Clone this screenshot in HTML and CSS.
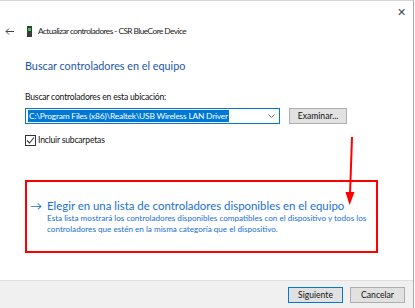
FILE: index.html
```html
<!DOCTYPE html>
<html lang="es">
<head>
  <meta charset="UTF-8" />
  <title>Actualizar controladores</title>
  <link rel="stylesheet" href="styles.css">
</head>
<body>
  <div class="window">
    <div class="topbar">
      <span class="close">&#x2715;</span>
    </div>
    <div class="header">
      <svg class="back" width="9" height="7" viewBox="0 0 9 7"><path d="M9 3.5 L1 3.5 M4 0.5 L1 3.5 L4 6.5" fill="none" stroke="#444" stroke-width="1"/></svg>
      <svg class="devicon" width="5" height="11" viewBox="0 0 5 11">
        <rect x="0" y="0" width="5" height="11" fill="#3a3a3a"/>
        <rect x="1" y="2" width="3" height="3" fill="#35c94a"/>
      </svg>
      <span class="title">Actualizar controladores - CSR BlueCore Device</span>
    </div>

    <div class="content">
      <h1>Buscar controladores en el equipo</h1>

      <label class="lbl">Buscar controladores en esta ubicación:</label>
      <div class="path-row">
        <div class="combo">
          <span class="sel">C:\Program Files (x86)\Realtek\USB Wireless LAN Driver</span>
          <svg class="chev" width="7" height="4" viewBox="0 0 7 4"><path d="M0.5 0.5 L3.5 3.5 L6.5 0.5" fill="none" stroke="#666" stroke-width="1"/></svg>
        </div>
        <button class="btn">Examinar...</button>
      </div>

      <div class="check-row">
        <span class="box">
          <svg width="9" height="9" viewBox="0 0 9 9"><path d="M1 4.5 L3.5 7 L8 1.5" fill="none" stroke="#333" stroke-width="1.1"/></svg>
        </span>
        <span>Incluir subcarpetas</span>
      </div>

      <div class="pick">
        <div class="pick-title"><span class="arr">&#x2192;</span>Elegir en una lista de controladores disponibles en el equipo</div>
        <div class="pick-desc">Esta lista mostrará los controladores disponibles compatibles con el dispositivo y todos los controladores que estén en la misma categoría que el dispositivo.</div>
      </div>

      <!-- flecha roja de anotación -->
      <svg class="annot" width="14" height="70" viewBox="0 0 14 70">
        <path d="M8 0 L6 58" stroke="#f00" stroke-width="2" fill="none"/>
        <path d="M1.5 55 L10.5 55 L5.6 68 Z" fill="#f00"/>
      </svg>
    </div>

    <div class="footer">
      <button class="btn default">Siguiente</button>
      <button class="btn">Cancelar</button>
    </div>
  </div>
</body>
</html>
```

FILE: styles.css
```css
* { box-sizing: border-box; }
body, html {
  margin: 0; padding: 0; width: 415px; height: 308px; overflow: hidden;
  font-family: 'Lato', 'Noto Sans', sans-serif; color: #000; background: #fff;
}
.window {
  display: flex; flex-direction: column; height: 308px; width: 414px;
  border-right: 1px solid #a8a8a8; border-top: 1px solid #d6d6d6;
  position: relative;
}
.topbar {
  height: 21px; display: flex; justify-content: flex-end; align-items: center;
  padding-right: 7px;
}
.close { font-size: 11px; color: #444; line-height: 1; }
.header {
  display: flex; align-items: center; height: 18px; padding-left: 5px;
  font-size: 8.3px; letter-spacing: -0.55px; color: #222;
}
.back { margin-right: 13px; }
.devicon { margin-right: 6px; }
.content {
  flex: 1; padding: 18px 0 0 25px; position: relative;
}
h1 {
  margin: 0; font-weight: normal; font-size: 10.8px; color: #1c55a7;
  line-height: 16px;
}
.lbl {
  display: block; margin-top: 17px; font-size: 8.6px; letter-spacing: -0.2px;
  color: #111; line-height: 12px;
}
.path-row {
  display: flex; align-items: center; margin-top: 5px;
}
.combo {
  width: 255px; height: 16px; border: 1px solid #0078d7;
  display: flex; align-items: center; justify-content: space-between;
  padding: 0 4px 0 2px;
}
.sel {
  background: #0078d7; color: #fff; font-size: 8.4px; letter-spacing: -0.2px;
  line-height: 12px; white-space: nowrap; padding: 0 1px;
}
.btn {
  font-family: inherit; font-size: 8.6px; color: #111;
  background: #e1e1e1; border: 1px solid #adadad;
  height: 16px; width: 58px; padding: 0; line-height: 14px;
}
.path-row .btn { margin-left: 9px; }
.check-row {
  display: flex; align-items: center; margin-top: 10px; height: 12px;
  font-size: 8.6px; letter-spacing: -0.2px; color: #111;
}
.box {
  width: 11px; height: 11px; border: 1px solid #333; margin-right: 2px;
  display: flex; align-items: center; justify-content: center;
}
.pick {
  margin: 34px 0 0 0; width: 353px; height: 73px;
  border: 2px solid #f00; padding: 16px 4px 0 3px; color: #1a6fd6;
}
.pick-title { font-size: 11.4px; line-height: 15px; display: flex; white-space: nowrap; }
.arr { width: 17px; font-size: 12px; }
.pick-desc {
  font-size: 8.15px; line-height: 11px; padding-left: 17px;
}
.annot { position: absolute; left: 344px; top: 97px; }
.footer {
  height: 28px; background: #f0f0f0; border-top: 1px solid #dfdfdf;
  display: flex; justify-content: flex-end; align-items: center;
  gap: 7px; padding-right: 8px;
}
.footer .btn { width: 55px; height: 16px; }
.btn.default { border: 1px solid #0078d7; }
```
